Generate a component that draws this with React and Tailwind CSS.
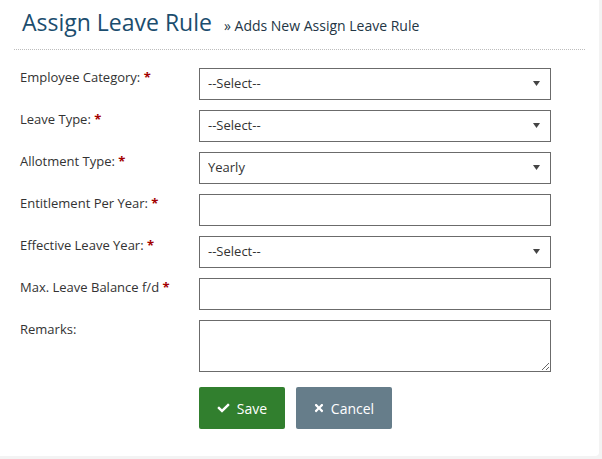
import React from "react";
import { FaCheck, FaTimes } from "react-icons/fa";

const fields = [
  { label: "Employee Category:", type: "select", value: "--Select--" },
  { label: "Leave Type:", type: "select", value: "--Select--" },
  { label: "Allotment Type:", type: "select", value: "Yearly" },
  { label: "Entitlement Per Year:", type: "text" },
  { label: "Effective Leave Year:", type: "select", value: "--Select--" },
  { label: "Max. Leave Balance f/d", type: "text" },
  { label: "Remarks:", type: "textarea", optional: true },
];

function Field({ field }) {
  if (field.type === "select") {
    return (
      <div className="relative w-[352px] h-[32px]">
        <select
          defaultValue={field.value}
          className="appearance-none w-full h-full border border-[#6b6b6b] bg-white pl-[8px] text-[13px] text-[#333] outline-none"
        >
          <option>{field.value}</option>
        </select>
        <svg className="absolute right-[11px] top-[13px] pointer-events-none" width="7" height="5" viewBox="0 0 7 5">
          <path d="M0 0h7L3.5 5z" fill="#444" />
        </svg>
      </div>
    );
  }
  if (field.type === "textarea") {
    return <textarea className="block w-[352px] h-[52px] border border-[#6b6b6b] bg-white outline-none" />;
  }
  return <input type="text" className="block w-[352px] h-[32px] border border-[#6b6b6b] bg-white outline-none" />;
}

export default function App() {
  return (
    <div className="h-[459px] w-[602px] bg-[#f3f3f3] font-['Open_Sans',sans-serif]">
      <div className="w-[599px] h-[456px] bg-white rounded-br-[4px]">
        <div className="mx-[14px] border-b border-dotted border-[#bdbdbd] flex items-baseline pl-[8px] pt-[4px] pb-[9px]">
          <h1 className="text-[23px] leading-[36px] text-[#1b4d6e]">Assign Leave Rule</h1>
          <span className="ml-[12px] text-[14px] text-[#233645]">» Adds New Assign Leave Rule</span>
        </div>
        <div className="pl-[20px] pt-[18px] flex flex-col gap-[10px]">
          {fields.map((f) => (
            <div key={f.label} className="flex">
              <label className="w-[179px] pt-0 leading-[18px] text-[13px] text-[#333]">
                {f.label}
                {!f.optional && <span className="text-[#a30000] font-bold"> *</span>}
              </label>
              <Field field={f} />
            </div>
          ))}
          <div className="flex gap-[11px] pl-[179px] pt-[5px]">
            <button className="h-[42px] w-[86px] rounded-[2px] bg-[#317f2e] text-white text-[14px] flex items-center justify-center gap-[7px]">
              <FaCheck className="w-[13px] h-[12px]" />
              Save
            </button>
            <button className="h-[42px] w-[96px] rounded-[2px] bg-[#667d8a] text-white text-[14px] flex items-center justify-center gap-[7px]">
              <FaTimes className="w-[10px] h-[12px]" />
              Cancel
            </button>
          </div>
        </div>
      </div>
    </div>
  );
}
